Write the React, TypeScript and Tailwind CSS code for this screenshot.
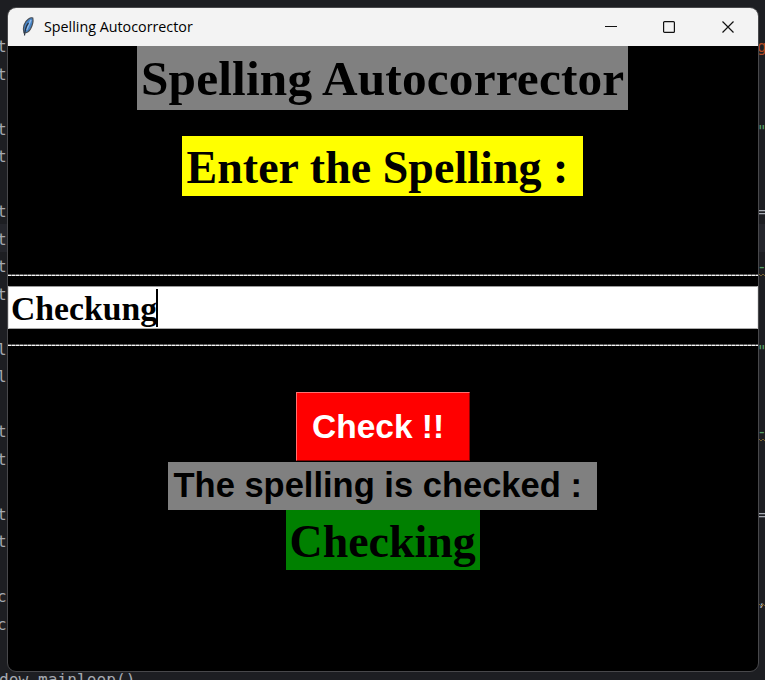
const leftCode: [number, string][] = [
  [46, 't'], [74, 't'], [129, 't'], [156, 't'], [211, 't'], [239, 't'], [266, 't'], [294, 't'],
  [349, 'l'], [376, 'l'], [431, 't'], [459, 't'], [514, 't'], [541, 't'], [596, 'c'], [624, 'c'],
];

const rightCode: [number, string, string][] = [
  [46, 'g', 'text-[#b34a22]'], [131, '"', 'text-[#559c64]'], [211, '=', 'text-[#a9adb5]'],
  [266, '-', 'text-[#559c64]'], [351, '"', 'text-[#559c64]'], [431, '-', 'text-[#559c64]'],
  [514, '=', 'text-[#a9adb5]'], [600, ',', 'text-[#a9adb5]'],
];

function Squiggle({ y }: { y: number }) {
  return (
    <svg className="absolute left-[759px]" style={{ top: y }} width="6" height="4" fill="none" stroke="#75602f">
      <path d="M0 1l2 2 2-2 2 2" />
    </svg>
  );
}

function Editor() {
  return (
    <div className="absolute inset-0 font-['DejaVu_Sans_Mono',monospace] text-[16px] leading-5 text-[#a5a9b0]">
      <div className="absolute top-[224px] left-0 h-[28px] w-full bg-[#25262c]" />
      {leftCode.map(([y, c]) => (
        <span key={y} className="absolute left-[-3px]" style={{ top: y - 9.5 }}>{c}</span>
      ))}
      {rightCode.map(([y, c, color]) => (
        <span key={y} className={`absolute left-[757px] ${color}`} style={{ top: y - 9.5 }}>{c}</span>
      ))}
      <Squiggle y={273} />
      <Squiggle y={438} />
      <Squiggle y={603} />
      <span className="absolute top-[670px] left-[-1px] text-[16.2px] whitespace-pre">dow.mainloop()</span>
    </div>
  );
}

function Feather() {
  return (
    <svg width="14" height="22" viewBox="0 0 14 22">
      <path d="M3 17C1.500 12 3 6 7.500 3 9 1.800 11.200 1.500 11.800 2c.6 3-.4 7.500-2.300 11C8 15.500 5 17 3 17Z" fill="#4583c6" stroke="#4a4f56" strokeWidth="1.200" />
      <path d="M10 4C8.500 7 7.500 10 5.500 14" stroke="#8fb9e8" strokeWidth="1.600" fill="none" />
      <path d="M7.500 7C5 10 4 14 3.500 19.500" stroke="#26303d" strokeWidth="1.200" fill="none" />
    </svg>
  );
}

function TitleBar() {
  return (
    <header className="flex h-[38px] w-full shrink-0 items-center bg-[#f3f3f3] pl-[13px] font-normal text-black">
      <Feather />
      <h1 className="ml-[9px] font-['Open_Sans','Noto_Sans',sans-serif] text-[14.3px] leading-5 whitespace-nowrap">
        Spelling Autocorrector
      </h1>
      <div className="mr-[24px] ml-auto flex items-center gap-[46px]">
        <svg className="-ml-px mr-px" width="12" height="12" stroke="#111" fill="none"><path d="M0 5.500h12" /></svg>
        <svg className="-ml-px mr-px" width="12" height="12" stroke="#111" fill="none"><rect x=".6" y=".6" width="10.800" height="10.800" rx="1" strokeWidth="1.200" /></svg>
        <svg width="12" height="12" stroke="#111" fill="none"><path d="M.5.500l11 11M11.500.500l-11 11" strokeWidth="1.200" /></svg>
      </div>
    </header>
  );
}

function Rule() {
  return (
    <div className="h-[2px] w-full shrink-0 bg-[repeating-linear-gradient(90deg,#f4f4f4_0px,#f4f4f4_3px,#999_3px,#999_4px)]">
      <div className="h-px w-full bg-black/60" />
    </div>
  );
}

export default function App() {
  return (
    <div className="relative h-[680px] w-[765px] overflow-hidden bg-[#1d1e22]">
      <Editor />
      <div className="relative pt-[7px] pl-[7px]">
        <main className="flex h-[665px] w-[752px] flex-col overflow-hidden rounded-[9px] border border-[#48484b] bg-black font-['Liberation_Serif',serif] font-bold text-black">
          <TitleBar />
          <div className="flex min-h-0 flex-1 flex-col items-center whitespace-pre">
            <div className="mr-[2px] h-[64px] w-[491px] shrink-0 bg-[#808080] pl-[4.5px] text-[49.3px] leading-[66px] tracking-[0.17px]">Spelling Autocorrector</div>
            <div className="mt-[26px] mr-[2px] h-[60px] w-[401px] shrink-0 bg-[#ffff00] pl-[5px] text-[45.9px] leading-[64px] tracking-[0.08px]">Enter the Spelling : </div>
            <div className="h-[78px] shrink-0" />
            <Rule />
            <div className="mt-[10px] flex h-[43px] w-full shrink-0 items-center border border-t-[#999] border-r-[#e8e8e8] border-b-[#aaa] border-l-[#ddd] bg-white pl-px text-[33.7px] leading-10">
              <span className="ml-px pt-[3px]">Checkung</span><span className="-ml-px h-[38px] w-[2px] bg-black" />
            </div>
            <div className="h-[15px] shrink-0" />
            <Rule />
            <button className="mt-[46px] mr-px h-[69px] w-[174px] shrink-0 border border-t-[#ff7070] border-r-[#900000] border-b-[#900000] border-l-[#ff7070] bg-[#ff0000] pl-[15.5px] text-left font-['Liberation_Sans',sans-serif] text-[33.5px] leading-[66px] text-white">Check !! </button>
            <div className="mt-px mr-[2px] h-[48px] w-[429px] shrink-0 bg-[#808080] pl-[6px] font-['Liberation_Sans',sans-serif] text-[34.5px] leading-[47px]">The spelling is checked : </div>
            <div className="mr-px h-[60px] w-[194px] shrink-0 bg-[#008000] pl-[4px] text-[45.9px] leading-[63px]">Checking</div>
          </div>
        </main>
      </div>
    </div>
  );
}
